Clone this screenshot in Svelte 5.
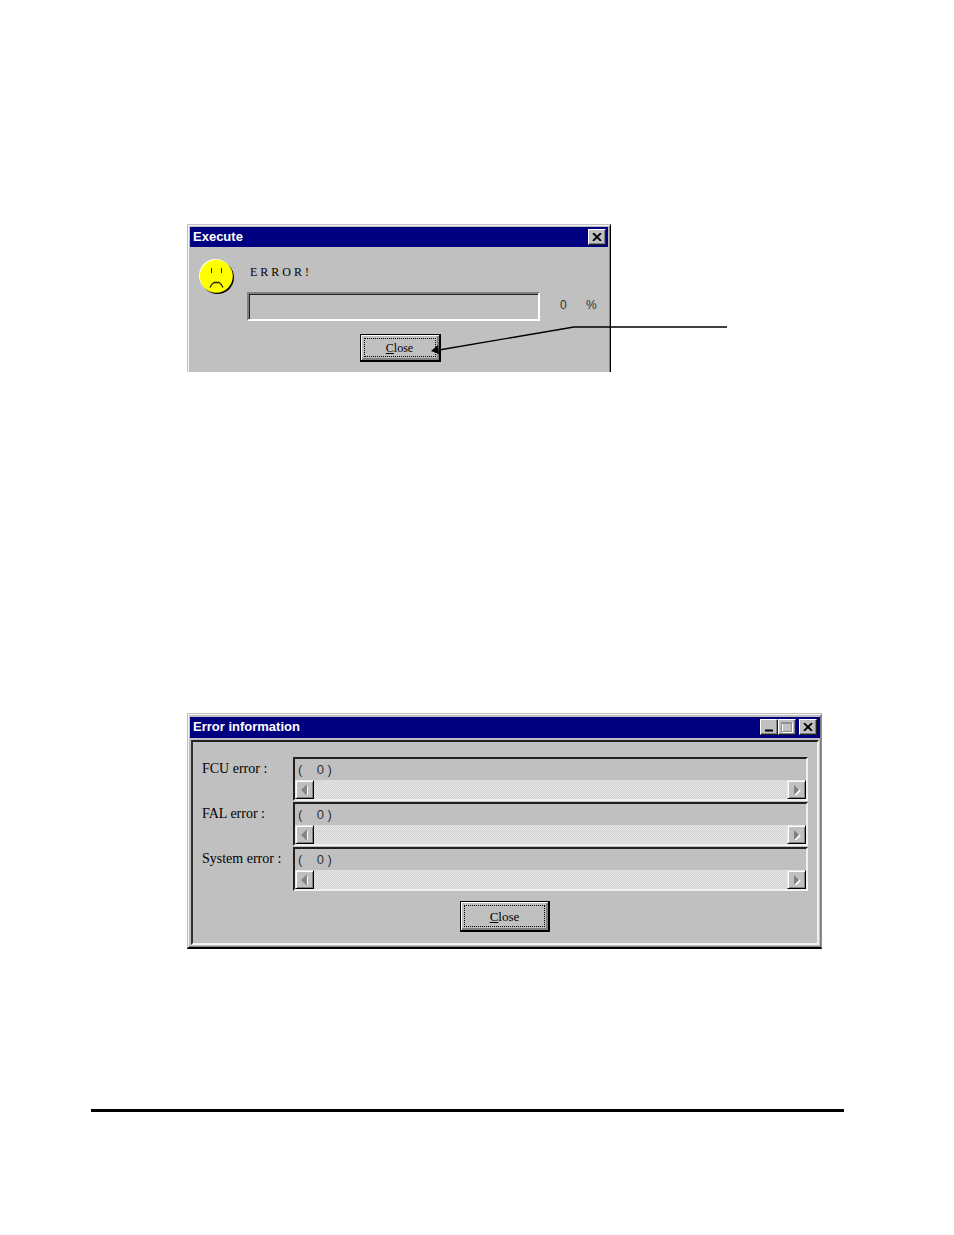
<script>
    let progress = 0

    let errors = [
        { id: 'fcu', label: 'FCU error :', value: '(    0 )' },
        { id: 'fal', label: 'FAL error :', value: '(    0 )' },
        { id: 'system', label: 'System error :', value: '(    0 )' }
    ]
</script>

<main class="page">
    <div class="figure">
        <section class="window execute">
            <header class="title-bar">
                <h2>Execute</h2>
                <button class="title-button" aria-label="Close window">
                    <svg width="10" height="8" viewBox="0 0 10 8"><path d="M1 0l8 8M9 0L1 8" stroke="#000" stroke-width="1.8" /></svg>
                </button>
            </header>
            <div class="execute-body">
                <svg class="face" width="36" height="37" viewBox="0 0 36 37">
                    <circle cx="18.5" cy="19.5" r="16.5" fill="#000" />
                    <circle cx="16.5" cy="17.5" r="16.5" fill="#fff" />
                    <circle cx="17.3" cy="18.3" r="16.5" fill="#ff0" />
                    <path d="M12.5 10v5M22.5 10v5" stroke="#333300" stroke-width="1" />
                    <path d="M11 29.5q1-3 4-5h5q3 2 4 5" fill="none" stroke="#222200" stroke-width="1.3" />
                </svg>
                <div class="status">
                    <p class="message">E R R O R !</p>
                    <div class="progress-row">
                        <div class="progress" role="progressbar" aria-label="Progress" aria-valuenow={progress} aria-valuemin="0" aria-valuemax="100">
                            <div class="progress-fill" style="width: {progress}%"></div>
                        </div>
                        <span class="amount">{progress}</span>
                        <span class="percent">%</span>
                    </div>
                </div>
            </div>
            <div class="actions">
                <button class="push small"><span><u>C</u>lose</span></button>
            </div>
        </section>
        <svg class="callout" width="296" height="32" viewBox="0 0 296 32">
            <path d="M296 3H143L8 26" fill="none" stroke="#000" stroke-width="1.4" />
            <path d="M0 27l7-6 1 9z" fill="#000" />
        </svg>
    </div>

    <section class="window info">
        <header class="title-bar">
            <h2>Error information</h2>
            <button class="title-button" aria-label="Minimize">
                <svg width="10" height="10" viewBox="0 0 10 10"><path d="M1 8.5h8" stroke="#000" stroke-width="2" /></svg>
            </button>
            <button class="title-button" aria-label="Maximize" disabled>
                <svg width="12" height="11" viewBox="0 0 12 11">
                    <path d="M1.5 1.5h10v9h-10z" fill="none" stroke="#fff" />
                    <path d="M.5 .5h10v9h-10zM.5 1.5h10" fill="none" stroke="#909090" />
                </svg>
            </button>
            <button class="title-button spaced" aria-label="Close window">
                <svg width="10" height="8" viewBox="0 0 10 8"><path d="M1 0l8 8M9 0L1 8" stroke="#000" stroke-width="1.8" /></svg>
            </button>
        </header>
        <div class="panel">
            {#each errors as error}
                <div class="row">
                    <label for={error.id}>{error.label}</label>
                    <div class="field">
                        <input id={error.id} type="text" readonly value={error.value} />
                        <div class="scrollbar">
                            <button class="arrow" aria-label="Scroll left">
                                <svg width="8" height="10" viewBox="0 0 8 10"><path d="M6.5 1v9" stroke="#fff" /><path d="M0 5l5-5h1v10h-1z" fill="#858585" /></svg>
                            </button>
                            <div class="track"></div>
                            <button class="arrow" aria-label="Scroll right">
                                <svg width="8" height="10" viewBox="0 0 8 10"><path d="M2 10l5-5" stroke="#fff" stroke-width="2" /><path d="M1 0l5 5-5 5z" fill="#808080" /></svg>
                            </button>
                        </div>
                    </div>
                </div>
            {/each}
            <div class="actions">
                <button class="push"><span><u>C</u>lose</span></button>
            </div>
        </div>
    </section>

    <hr />
</main>

<style>
    :global(body){
        margin: 0;
        background: #fff;
    }
    .page{
        padding: 224px 110px 122px 91px;
        color: #000;
        font-family: "Liberation Serif", serif;
    }
    .page *{
        box-sizing: border-box;
    }
    .figure{
        position: relative;
        margin: 0 117px 341px 96px;
        padding-right: 116px;
    }
    .window{
        background: #c0c0c0;
        border: 1px solid #c0c0c0;
    }
    .execute{
        height: 148px;
        padding: 2px 2px 0 2px;
        border-right: 1px solid #000;
        border-bottom: 0;
        box-shadow: inset 1px 1px #f4f4f4, inset -1px 0 #808080;
    }
    .title-bar{
        display: flex;
        align-items: center;
        height: 20px;
        padding: 0 3px;
        background: #000080;
    }
    .execute .title-bar{
        padding-right: 2px;
    }
    .title-bar h2{
        flex: 1;
        margin: 0;
        color: #fff;
        font: bold 13px/20px "Liberation Sans", sans-serif;
    }
    .title-button{
        display: flex;
        align-items: center;
        justify-content: center;
        width: 18px;
        height: 16px;
        padding: 0;
        background: #c0c0c0;
        border: 1px solid;
        border-color: #fff #202020 #202020 #fff;
        box-shadow: inset -1px -1px #808080;
    }
    .spaced{
        margin-left: 3px;
    }
    .execute-body{
        display: flex;
        gap: 12px;
        padding: 11px 11px 0 9px;
    }
    .face{
        flex: none;
    }
    .status{
        flex: 1;
    }
    .message{
        margin: 0;
        padding: 6px 3px 12px;
        font-size: 12px;
        line-height: 16px;
    }
    .progress-row{
        display: flex;
        color: #303030;
        font: 12px/26px "Liberation Sans", sans-serif;
    }
    .progress{
        flex: 1;
        height: 29px;
        border: 2px solid;
        border-color: #808080 #fff #fff #808080;
        box-shadow: inset 1px 1px #202020;
    }
    .progress-fill{
        height: 100%;
        background: #000080;
    }
    .amount{
        width: 26px;
        margin-left: 20px;
    }
    .percent{
        width: 11px;
    }
    .actions{
        display: flex;
        justify-content: center;
    }
    .execute .actions{
        padding: 13px 0 0 2px;
    }
    .push{
        width: 90px;
        height: 31px;
        padding: 3px;
        background: #c0c0c0;
        border: 1px solid #000;
        border-right-width: 2px;
        border-bottom-width: 2px;
        box-shadow: inset 1px 1px #fff, inset -2px -2px #808080;
        font: 13px/21px "Liberation Serif", serif;
        color: #000;
    }
    .push span{
        display: block;
        height: 100%;
        border: 1px dotted #000;
    }
    .small{
        width: 81px;
        height: 28px;
        font-size: 12px;
        line-height: 19px;
    }
    .callout{
        position: absolute;
        top: 100px;
        right: 0;
    }
    .info{
        margin: 0 22px 0 96px;
        padding: 3px 1px 2px 2px;
        border-right-color: #909090;
        border-bottom: 2px solid #000;
        box-shadow: inset 1px 1px #f4f4f4, inset -1px -1px #808080;
    }
    .info .title-bar{
        height: 21px;
        padding-bottom: 1px;
    }
    .panel{
        margin: 2px 1px 0 1px;
        padding: 15px 9px 11px;
        border: 2px solid;
        border-color: #202020 #f0f0f0 #f0f0f0 #303030;
    }
    .row{
        display: flex;
        margin-bottom: 1px;
    }
    .row label{
        width: 91px;
        padding-top: 4px;
        font-size: 14px;
        line-height: 16px;
    }
    .field{
        flex: 1;
        border: 2px solid;
        border-color: #202020 #f0f0f0 #f0f0f0 #202020;
    }
    .field input{
        display: block;
        width: 100%;
        height: 21px;
        padding: 0 3px;
        background: #c0c0c0;
        border: 0;
        outline: 0;
        color: #303030;
        font: 13px/21px "Liberation Sans", sans-serif;
    }
    .scrollbar{
        display: flex;
        height: 19px;
    }
    .arrow{
        display: flex;
        align-items: center;
        justify-content: center;
        width: 19px;
        padding: 0;
        background: #c0c0c0;
        border: 1px solid;
        border-color: #e8e8e8 #000 #000 #e8e8e8;
        box-shadow: inset 1px 1px #fff, inset -1px -1px #808080;
    }
    .track{
        flex: 1;
        background: repeating-conic-gradient(#d0d0d0 0 25%, #e8e8e8 0 50%) 0 0 / 2px 2px;
    }
    .panel .actions{
        padding-top: 9px;
    }
    hr{
        height: 3px;
        margin: 160px 0 0;
        background: #000;
        border: 0;
    }
</style>
